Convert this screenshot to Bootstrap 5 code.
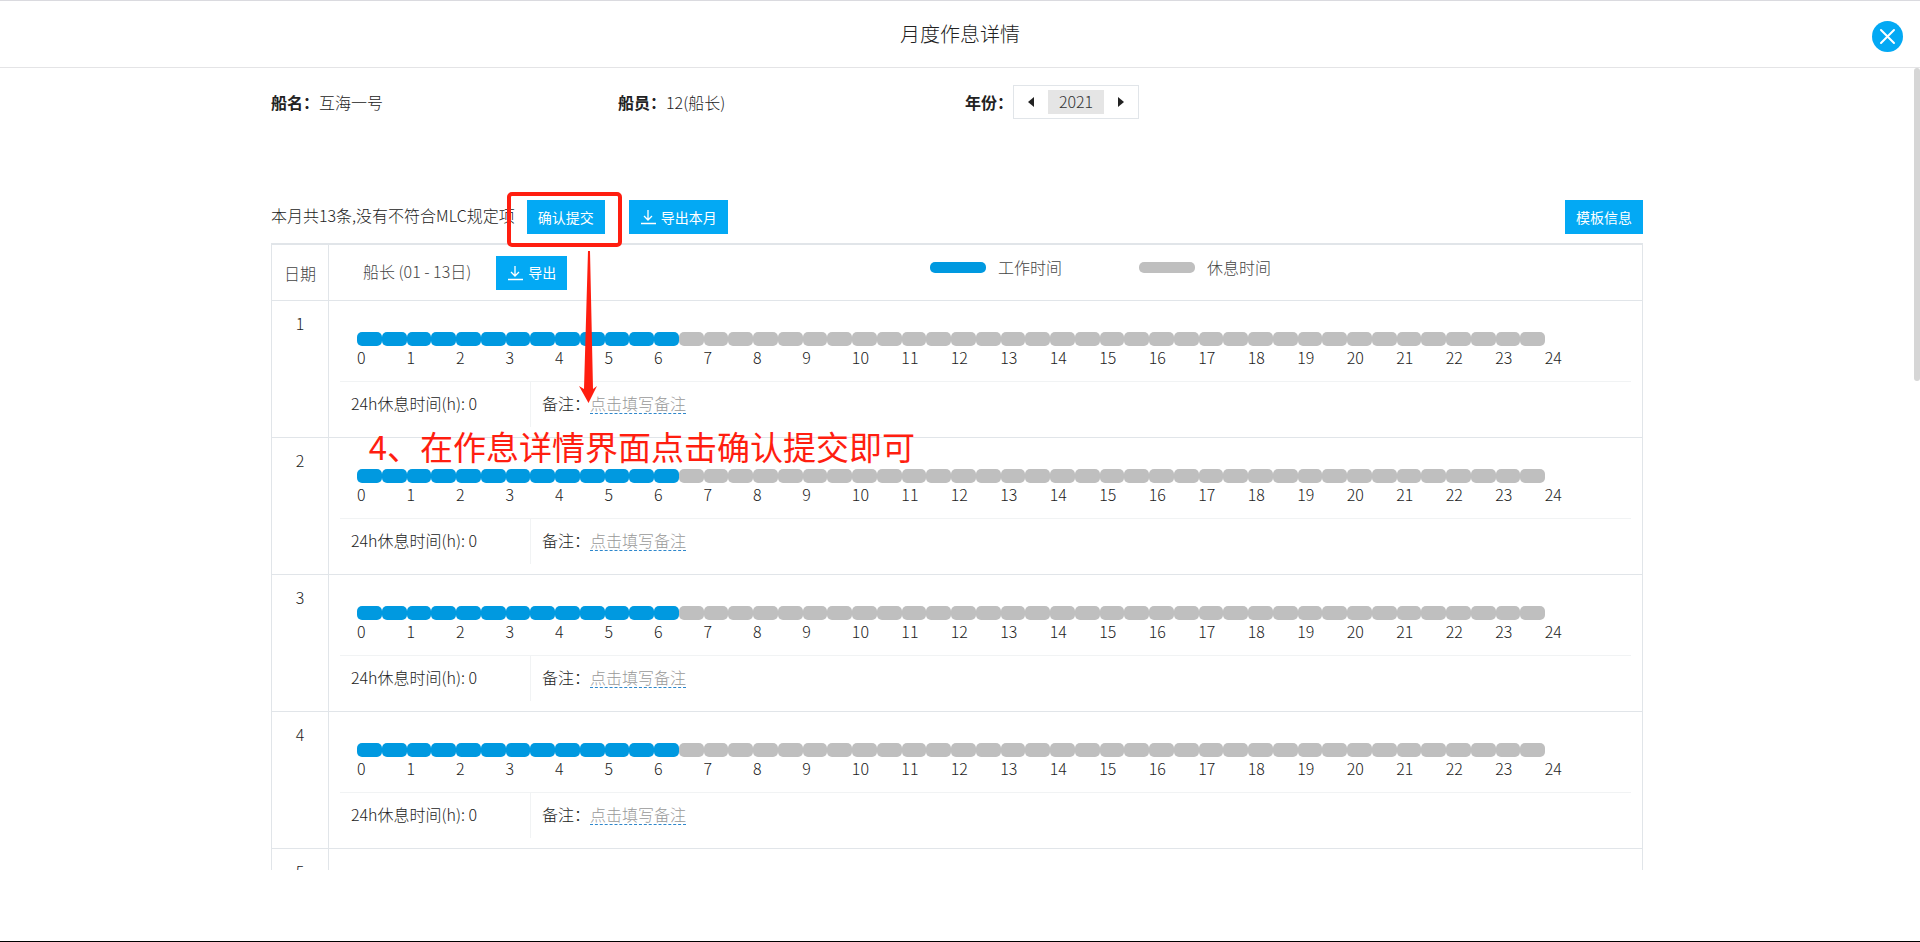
<!DOCTYPE html>
<html lang="zh-CN">
<head>
<meta charset="utf-8">
<meta name="viewport" content="width=device-width, initial-scale=1">
<title>月度作息详情</title>
<link href="https://cdn.jsdelivr.net/npm/bootstrap@5.3.0/dist/css/bootstrap.min.css" rel="stylesheet">
<style>
  :root { --line: #e1e5e9; --brand: #03a9f4; --work: #0099e0; --rest: #bfbfbf; --mark: #ff1e10; }
  body { font-family: "Noto Sans CJK SC", sans-serif; font-size: 16px; line-height: 24px; font-weight: 300; color: #222; }
  b { font-weight: 700; }
  .page-head { height: 68px; border-top: 1px solid #dadadf; border-bottom: 1px solid #e4e4e6; }
  .page-head h1 { font-size: 20px; line-height: 30px; font-weight: 300; color: #222; }
  .close-btn { right: 17px; top: 20px; width: 31px; height: 31px; background: var(--brand); }
  .page-foot { height: 72px; border-bottom: 1px solid #000; }
  .scroll-area { min-height: 0; padding-right: 6px; }
  .scroll-thumb { right: 0; top: 0; width: 6px; height: 39%; background: #d6d6d6; }
  .sheet { width: 72%; max-width: 1372px; padding-top: 17px; }
  .year-box { height: 34px; border: 1px solid var(--line); }
  .year-box button { width: 34px; height: 24px; }
  .year-box output { width: 56px; height: 24px; background: #e5e5e5; color: #333; text-align: center; line-height: 22px; }
  .toolbar { margin-top: 81px; margin-bottom: 9px; height: 34px; }
  .summary { margin-right: 12px; padding-bottom: 5px; }
  .btn-act { --bs-btn-color: #fff; --bs-btn-bg: var(--brand); --bs-btn-hover-color: #fff; --bs-btn-hover-bg: #0295d8;
    --bs-btn-border-width: 0; --bs-btn-border-radius: 0; --bs-btn-padding-x: 11px; --bs-btn-padding-y: 0;
    --bs-btn-font-size: 14px; --bs-btn-font-weight: 400; height: 34px; white-space: nowrap; }
  .log { width: 100%; border-collapse: separate; border-spacing: 0; border: 1px solid var(--line); border-top-width: 2px; }
  .log th, .log td { font-weight: 300; vertical-align: top; border-bottom: 1px solid var(--line); }
  .log th { height: 56px; vertical-align: middle; color: #444; }
  .log td { height: 137px; }
  .log .day { width: 57px; text-align: center; border-right: 1px solid var(--line); }
  .log td.day { padding-top: 10px; }
  .head-left { flex: 0 0 46%; padding-left: 33px; gap: 25px; margin-right: -3px; }
  .head-left span { padding-bottom: 4px; }
  .legend { gap: 77px; padding-bottom: 11px; }
  .swatch { width: 56px; height: 11px; border-radius: 5px; }
  .is-work { background: var(--work); }
  .is-rest { background: var(--rest); }
  .entry { margin: 0 10px; padding-top: 30px; }
  .track { width: 92%; margin-left: 17px; }
  .track i { height: 14px; border-radius: 5px; flex: 1 1 0; }
  .hours { line-height: 22px; }
  .hours span { flex: 0 0 calc(100% / 24); white-space: nowrap; }
  .meta { margin-top: 13px; border-top: 1px solid #f1f3f4; }
  .rest-total { width: 191px; padding: 9px 0 12px 11px; border-right: 1px solid #f1f3f4; }
  .remark { padding: 9px 0 0 11px; }
  .remark a { color: #999; line-height: 20px; border-bottom: 1px dashed #2d87cc; }
  .ring { inset: -8px -17px -13px -20px; border: 4px solid var(--mark); border-radius: 5px; }
  .pointer { left: 52px; top: 51px; }
  .hint { left: -158px; top: 222px; font-size: 33px; line-height: 48px; font-weight: 400; color: var(--mark); }
  .over { z-index: 2; pointer-events: none; }
</style>
</head>
<body class="vh-100 d-flex flex-column overflow-hidden bg-white">
<header class="page-head position-relative d-flex align-items-center justify-content-center flex-shrink-0">
  <h1 class="m-0">月度作息详情</h1>
  <button type="button" class="close-btn btn p-0 border-0 rounded-circle position-absolute d-flex align-items-center justify-content-center" aria-label="关闭">
    <svg width="17" height="17" viewBox="0 0 17 17" stroke="#fff" stroke-width="2" stroke-linecap="round"><path d="M2 2l13 13M15 2L2 15"/></svg>
  </button>
</header>

<main class="scroll-area position-relative flex-fill overflow-hidden">
  <div class="scroll-thumb position-absolute rounded-pill"></div>
  <div class="sheet mx-auto">
    <div class="row gx-3 align-items-center flex-nowrap">
      <div class="col-3"><b>船名：</b>互海一号</div>
      <div class="col-3"><b>船员：</b>12(船长)</div>
      <div class="col-3 d-flex align-items-center">
        <b class="text-nowrap">年份：</b>
        <div class="year-box d-flex align-items-center">
          <button type="button" class="btn p-0 border-0 d-flex align-items-center justify-content-center" aria-label="上一年"><svg width="6" height="10" viewBox="0 0 6 10"><path d="M6 0v10L0 5z" fill="#222"/></svg></button>
          <output>2021</output>
          <button type="button" class="btn p-0 border-0 d-flex align-items-center justify-content-center" aria-label="下一年"><svg width="6" height="10" viewBox="0 0 6 10"><path d="M0 0v10l6-5z" fill="#222"/></svg></button>
        </div>
      </div>
    </div>

    <div class="toolbar d-flex align-items-center">
      <span class="summary text-nowrap">本月共13条,没有不符合MLC规定项</span>
      <div class="position-relative me-4">
        <button type="button" class="btn btn-act">确认提交</button>
        <div class="ring over position-absolute"></div>
        <svg class="pointer over position-absolute" width="18" height="152" viewBox="0 0 18 152"><path d="M9 0h2l3 138 4-3-8.500 17L0 135l5 3z" fill="#ff1e10"/></svg>
        <div class="hint over position-absolute text-nowrap">4、在作息详情界面点击确认提交即可</div>
      </div>
      <button type="button" class="btn btn-act d-flex align-items-center"><svg class="me-1" width="17" height="16" viewBox="0 0 17 16" fill="none" stroke="#fff" stroke-width="1.300"><path d="M8 1v10M4 7l4 4 4-4M1 14.500h15"/></svg>导出本月</button>
      <button type="button" class="btn btn-act ms-auto">模板信息</button>
    </div>

    <table class="log">
      <thead>
        <tr>
          <th class="day" scope="col">日期</th>
          <th scope="col">
            <div class="d-flex align-items-center">
              <div class="head-left d-flex align-items-center">
                <span>船长 (01 - 13日)</span>
                <button type="button" class="btn btn-act d-flex align-items-center"><svg class="me-1" width="17" height="16" viewBox="0 0 17 16" fill="none" stroke="#fff" stroke-width="1.300"><path d="M8 1v10M4 7l4 4 4-4M1 14.500h15"/></svg>导出</button>
              </div>
              <div class="legend d-flex">
                <div class="d-flex align-items-center"><span class="swatch is-work me-2"></span><span class="ps-1">工作时间</span></div>
                <div class="d-flex align-items-center"><span class="swatch is-rest me-2"></span><span class="ps-1">休息时间</span></div>
              </div>
            </div>
          </th>
        </tr>
      </thead>
      <tbody id="days"></tbody>
    </table>
  </div>
</main>
<footer class="page-foot flex-shrink-0"></footer>

<script src="https://cdn.jsdelivr.net/npm/bootstrap@5.3.0/dist/js/bootstrap.bundle.min.js"></script>
<script>
  // 每天 48 个半小时格，前 workSlots 格为工作时间
  const workSlots = 13;
  const loadedDays = 4;
  const slots = Array.from({ length: 48 }, (_, i) => `<i class="${i < workSlots ? 'is-work' : 'is-rest'}"></i>`).join('');
  const hours = Array.from({ length: 25 }, (_, i) => `<span>${i}</span>`).join('');
  const entry = `
        <div class="entry">
          <div class="track d-flex">${slots}</div>
          <div class="track hours d-flex">${hours}</div>
          <div class="meta d-flex">
            <div class="rest-total">24h休息时间(h): 0</div>
            <div class="remark">备注：<a href="#" class="d-inline-block text-decoration-none">点击填写备注</a></div>
          </div>
        </div>`;
  document.getElementById('days').innerHTML = Array.from({ length: loadedDays + 1 }, (_, d) =>
    `<tr><td class="day">${d + 1}</td><td>${d < loadedDays ? entry : ''}</td></tr>`).join('');
</script>
</body>
</html>
